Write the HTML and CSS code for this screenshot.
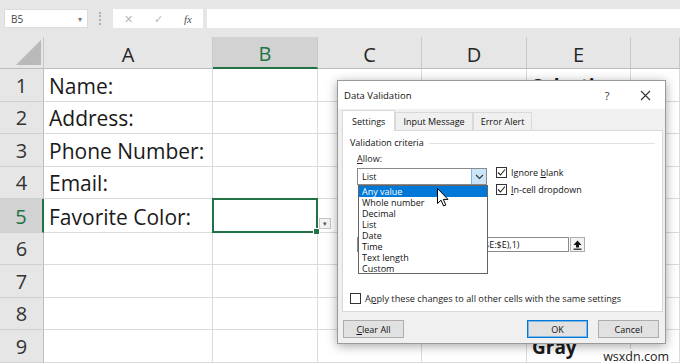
FILE: index.html
```
<!DOCTYPE html>
<html lang="en">
<head>
    <meta charset="UTF-8">
    <title>Data Validation</title>
    <link rel="stylesheet" href="styles.css">
</head>
<body>
<div class="toolbar">
    <div class="namebox"><span>B5</span><span class="nb-arrow">&#9662;</span></div>
    <div class="grip"></div>
    <div class="fxbox">
        <span class="fx-x">&#10005;</span>
        <span class="fx-ok">&#10003;</span>
        <span class="fx-f">fx</span>
    </div>
    <div class="formula"></div>
</div>

<div class="sheet">
    <div class="corner"></div>
    <div class="hd">A</div>
    <div class="hd hd-sel">B</div>
    <div class="hd">C</div>
    <div class="hd">D</div>
    <div class="hd">E</div>
    <div class="hd"></div>

    <div class="rh">1</div><div class="c">Name:</div><div class="c"></div><div class="c"></div><div class="c"></div><div class="c bold">Selection</div><div class="c"></div>
    <div class="rh">2</div><div class="c">Address:</div><div class="c"></div><div class="c"></div><div class="c"></div><div class="c"></div><div class="c"></div>
    <div class="rh">3</div><div class="c">Phone Number:</div><div class="c"></div><div class="c"></div><div class="c"></div><div class="c"></div><div class="c"></div>
    <div class="rh">4</div><div class="c">Email:</div><div class="c"></div><div class="c"></div><div class="c"></div><div class="c"></div><div class="c"></div>
    <div class="rh rh-sel">5</div><div class="c">Favorite Color:</div><div class="c active"><span class="cell-drop">&#9662;</span></div><div class="c"></div><div class="c"></div><div class="c"></div><div class="c"></div>
    <div class="rh">6</div><div class="c"></div><div class="c"></div><div class="c"></div><div class="c"></div><div class="c"></div><div class="c"></div>
    <div class="rh">7</div><div class="c"></div><div class="c"></div><div class="c"></div><div class="c"></div><div class="c"></div><div class="c"></div>
    <div class="rh">8</div><div class="c"></div><div class="c"></div><div class="c"></div><div class="c"></div><div class="c"></div><div class="c"></div>
    <div class="rh">9</div><div class="c"></div><div class="c"></div><div class="c"></div><div class="c"></div><div class="c bold">Gray</div><div class="c"></div>
</div>

<!-- dialog over the sheet -->
<div class="dialog">
    <div class="dlg-title">
        <span class="dlg-name">Data Validation</span>
        <span class="dlg-help">?</span>
        <span class="dlg-close"><svg width="11" height="11" viewBox="0 0 11 11"><path d="M1 1L10 10M10 1L1 10" stroke="#333" stroke-width="1.1" fill="none"/></svg></span>
    </div>
    <div class="tabs">
        <div class="tab on">Settings</div>
        <div class="tab">Input Message</div>
        <div class="tab">Error Alert</div>
    </div>
    <div class="page">
        <div class="group">Validation criteria</div>
        <div class="allow">
            <div class="lbl"><u>A</u>llow:</div>
            <div class="allow-row">
                <div class="combo">
                    <span class="combo-val">List</span>
                    <span class="combo-btn"><svg width="9" height="6" viewBox="0 0 9 6"><path d="M1 1L4.5 4.5L8 1" stroke="#333" stroke-width="1.1" fill="none"/></svg></span>
                    <ul class="droplist">
                        <li class="hi">Any value</li>
                        <li>Whole number</li>
                        <li>Decimal</li>
                        <li>List</li>
                        <li>Date</li>
                        <li>Time</li>
                        <li>Text length</li>
                        <li>Custom</li>
                    </ul>
                    <svg class="cursor" width="12" height="19" viewBox="0 0 12 19"><path d="M0.5 0.5L0.5 15.5L4 12.2L6.6 18L8.8 17L6.3 11.4L11 11.4Z" fill="#fff" stroke="#000" stroke-width="1"/></svg>
                </div>
                <div class="checks">
                    <div class="chk"><span class="box"><svg width="9" height="9" viewBox="0 0 9 9"><path d="M1 4.5L3.5 7L8 1.5" stroke="#222" stroke-width="1.1" fill="none"/></svg></span><span>Ignore <u>b</u>lank</span></div>
                    <div class="chk"><span class="box"><svg width="9" height="9" viewBox="0 0 9 9"><path d="M1 4.5L3.5 7L8 1.5" stroke="#222" stroke-width="1.1" fill="none"/></svg></span><span><u>I</u>n-cell dropdown</span></div>
                </div>
            </div>
            <div class="src-row">
                <div class="src-input">=OFFSET($E$2,0,0,COUNTA($E:$E),1)</div>
                <div class="src-btn"><svg width="9" height="10" viewBox="0 0 9 10"><path d="M4.5 0.5L8.5 5H6V7.5H3V5H0.5Z" fill="#111"/><rect x="0.5" y="8.6" width="8" height="1.2" fill="#111"/></svg></div>
            </div>
        </div>
        <div class="apply"><span class="box"></span><span>A<u>p</u>ply these changes to all other cells with the same settings</span></div>
    </div>
    <div class="btns">
        <div class="btn"><u>C</u>lear All</div>
        <div class="spacer"></div>
        <div class="btn ok">OK</div>
        <div class="btn">Cancel</div>
    </div>
</div>

<div class="watermark">wsxdn.com</div>
</body>
</html>
```

FILE: styles.css
```
*{margin:0;padding:0;box-sizing:border-box;list-style:none;}
body{
    width:680px;
    height:364px;
    overflow:hidden;
    position:relative;
    background:#fff;
    font-family:"Open Sans","Noto Sans",sans-serif;
    color:#1a1a1a;
}

/* formula bar */
.toolbar{
    height:37px;
    padding:9px 0 0 4px;
    background:#e6e6e6;
    display:flex;
    align-items:flex-start;
}
.namebox{
    width:84px;height:19px;
    background:#fff;
    border:1px solid #dcdcdc;
    display:flex;align-items:center;justify-content:space-between;
    padding:0 5px 0 6px;
    font-size:10px;color:#444;
}
.nb-arrow{font-size:8px;color:#777;}
.grip{
    width:2px;height:13px;
    margin:3px 12px 0 11px;
    border-left:2px dotted #b0b0b0;
}
.fxbox{
    width:90px;height:19px;
    background:#fff;
    display:flex;align-items:center;
}
.fxbox span{width:30px;text-align:center;}
.fx-x,.fx-ok{font-size:11px;color:#b8b8b8;}
.fx-f{font:italic 11px "Liberation Serif",serif;color:#555;}
.formula{flex:1;height:19px;margin-left:4px;background:#fff;}

/* sheet */
.sheet{
    display:grid;
    grid-template-columns:44px 169px 105px 104px 105px 104px 49px;
    grid-template-rows:32px 33px 32px 33px 32px 34px 32px 33px 32px 33px;
}
.corner{
    background:#e6e6e6;
    border-right:1px solid #c8c8c8;
    border-bottom:1px solid #bdbdbd;
    position:relative;
}
.corner::after{
    content:"";
    position:absolute;right:2px;bottom:3px;
    width:25px;height:25px;
    background:#b9b9b9;
    clip-path:polygon(100% 0,100% 100%,0 100%);
}
.hd{
    background:#e6e6e6;
    border-right:1px solid #c8c8c8;
    border-bottom:1px solid #bdbdbd;
    display:flex;align-items:center;justify-content:center;
    font-size:20px;color:#262626;
    padding-top:3px;
}
.hd-sel{
    background:#d2d2d2;
    color:#217346;
    border-bottom:2px solid #217346;
}
.rh{
    background:#e6e6e6;
    border-right:1px solid #bdbdbd;
    border-bottom:1px solid #d0d0d0;
    display:flex;align-items:flex-end;justify-content:center;
    font-size:20px;color:#333;
    padding-bottom:1px;
    line-height:28px;
}
.rh-sel{
    background:#d2d2d2;
    color:#217346;
    border-right:2px solid #217346;
}
.c{
    border-right:1px solid #dadada;
    border-bottom:1px solid #dadada;
    display:flex;align-items:flex-end;
    padding:0 0 1px 5px;
    font-size:21px;line-height:28px;
    white-space:nowrap;
    position:relative;
}
.bold{font-weight:700;font-size:19px;}
.active::after{
    content:"";
    position:absolute;left:-1px;top:-1px;right:-1px;bottom:-1px;
    border:2px solid #217346;
}
.active::before{
    content:"";
    position:absolute;right:-3px;bottom:-3px;
    width:5px;height:5px;
    background:#217346;
    border:1px solid #fff;
    z-index:1;
}
.cell-drop{
    position:absolute;left:calc(100% + 2px);bottom:3px;
    width:12px;height:11px;
    background:#f3f3f3;
    border:1px solid #c6c6c6;
    font-size:7px;line-height:9px;text-align:center;color:#555;
    z-index:1;
}

/* dialog */
.dialog{
    position:absolute;left:337px;top:80px;
    width:329px;height:264px;
    background:#f0f0f0;
    border:1px solid #9a9a9a;
    box-shadow:0 2px 10px rgba(0,0,0,0.35);
    font-size:9px;color:#111;
    z-index:5;
}
.dlg-title{
    height:28px;
    background:#fff;
    display:flex;align-items:center;
    padding:0 5px 0 6px;
}
.dlg-name{flex:1;font-size:9.5px;}
.dlg-help{width:30px;text-align:center;font-size:11px;color:#333;}
.dlg-close{width:30px;margin-left:8px;display:flex;justify-content:center;}
.tabs{
    height:21px;
    margin-top:1px;
    margin-bottom:-1px;
    padding-left:4px;
    display:flex;align-items:flex-end;
    position:relative;z-index:1;
}
.tab{
    height:18px;
    margin-bottom:1px;
    padding:0 7px;
    background:#f0f0f0;
    border:1px solid #d9d9d9;
    border-bottom:none;
    display:flex;align-items:center;
}
.tab.on{
    height:21px;
    margin-bottom:0;
    background:#fff;
    padding:0 9px 0 9px;
}
.page{
    height:182px;
    margin:0 2px 0 4px;
    background:#fff;
    border:1px solid #d9d9d9;
    padding:5px 7px 0 7px;
}
.group{
    display:flex;align-items:center;
    line-height:13px;
}
.group::after{
    content:"";
    flex:1;
    margin:2px 0 0 5px;
    border-top:1px solid #e3e3e3;
}
.allow{padding-left:7px;}
.lbl{line-height:13px;margin-top:3px;color:#222;}
.allow-row{
    display:flex;align-items:flex-start;
    margin-top:2px;
}
.combo{
    width:130px;height:17px;
    margin-top:1px;
    border:1px solid #8a8a8a;
    background:#fff;
    display:flex;align-items:center;
    position:relative;
}
.combo-val{flex:1;padding-left:4px;}
.combo-btn{
    width:15px;height:15px;
    background:#cce4f7;
    border-left:1px solid #7eb4ea;
    display:flex;align-items:center;justify-content:center;
}
.droplist{
    position:absolute;left:0;top:16px;
    width:130px;height:89px;
    background:#fff;
    border:1px solid #646464;
    z-index:2;
}
.droplist li{
    height:11px;line-height:11px;
    padding-left:3px;
}
.droplist li.hi{background:#0078d7;color:#fff;}
.cursor{position:absolute;left:79px;top:19px;z-index:3;}
.checks{margin-left:9px;}
.chk{
    height:17px;
    display:flex;align-items:flex-start;
    line-height:11px;
}
.box{
    width:11px;height:11px;
    border:1px solid #333;
    background:#fff;
    margin-right:4px;
    display:flex;align-items:center;justify-content:center;
}
.src-row{display:flex;margin-top:36px;}
.src-input{
    width:212px;height:15px;
    border:1px solid #8a8a8a;
    padding-left:10px;
    line-height:13px;
    white-space:nowrap;overflow:hidden;
}
.src-btn{
    width:15px;height:15px;
    margin-left:1px;
    background:#f3f3f3;
    border:1px solid #adadad;
    display:flex;align-items:center;justify-content:center;
}
.apply{
    margin-top:41px;
    display:flex;align-items:center;
    line-height:11px;color:#222;
    font-size:9.2px;
}
.btns{
    display:flex;
    padding:8px 6px 0 5px;
}
.spacer{flex:1;}
.btn{
    width:61px;height:18px;
    background:#e1e1e1;
    border:1px solid #adadad;
    display:flex;align-items:center;justify-content:center;
}
.btn.ok{border:1px solid #0078d7;box-shadow:inset 0 0 0 1px #7fb7e6;margin-right:10px;}

.watermark{
    position:absolute;right:9px;bottom:0;
    padding:0 2px;
    background:rgba(255,255,255,0.85);
    font:12.5px "Open Sans",sans-serif;color:#222;
    line-height:15px;
}
```
